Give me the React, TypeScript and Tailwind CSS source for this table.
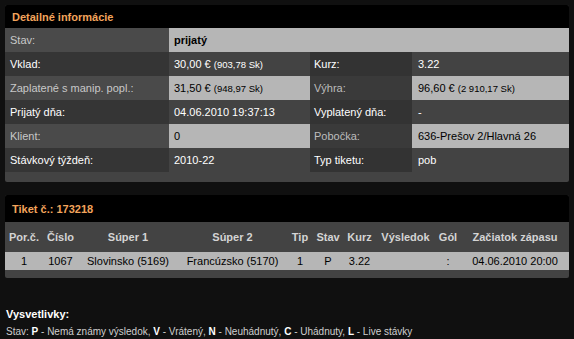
import React from 'react';

const font = { fontFamily: '"Liberation Sans", Arial, sans-serif' };

interface InfoRow {
  label: string;
  value: React.ReactNode;
  label2?: string;
  value2?: React.ReactNode;
}

function Money({ eur, sk }: { eur: string; sk: string }) {
  return (
    <span>
      {eur + ' €'}
      {' '}
      <span className="text-[9.5px]">({sk} Sk)</span>
    </span>
  );
}

const rows: InfoRow[] = [
  { label: 'Stav:', value: <b>prijatý</b> },
  { label: 'Vklad:', value: <Money eur="30,00" sk="903,78" />, label2: 'Kurz:', value2: '3.22' },
  {
    label: 'Zaplatené s manip. popl.:',
    value: <Money eur="31,50" sk="948,97" />,
    label2: 'Výhra:',
    value2: <Money eur="96,60" sk="2 910,17" />,
  },
  { label: 'Prijatý dňa:', value: '04.06.2010 19:37:13', label2: 'Vyplatený dňa:', value2: '-' },
  { label: 'Klient:', value: '0', label2: 'Pobočka:', value2: '636-Prešov 2/Hlavná 26' },
  { label: 'Stávkový týždeň:', value: '2010-22', label2: 'Typ tiketu:', value2: 'pob' },
];

const cols = [
  { name: 'Por.č.', w: 'w-[38px]' },
  { name: 'Číslo', w: 'w-[35px]' },
  { name: 'Súper 1', w: 'w-[100px]' },
  { name: 'Súper 2', w: 'w-[109px]' },
  { name: 'Tip', w: 'w-[26px]' },
  { name: 'Stav', w: 'w-[30px]' },
  { name: 'Kurz', w: 'w-[33px]' },
  { name: 'Výsledok', w: 'w-[59px]' },
  { name: 'Gól', w: 'w-[26px]' },
  { name: 'Začiatok zápasu', w: 'w-[108px]' },
];

const ticket = ['1', '1067', 'Slovinsko (5169)', 'Francúzsko (5170)', '1', 'P', '3.22', '', ':', '04.06.2010 20:00'];

export default function App() {
  return (
    <div
      className="w-[574px] h-[339px] bg-[#101010] pt-[5px] pl-[5px] text-[11px] leading-[16px] overflow-hidden"
      style={font}
    >
      {/* detail panel */}
      <div className="w-[564px] bg-[#434343] rounded-[2px] overflow-hidden pb-[10px]">
        <div className="h-[23px] bg-black pl-[7px] flex items-center font-bold text-[#f2a45c]">
          Detailné informácie
        </div>
        {rows.map((r, i) => {
          const odd = i % 2 === 0;
          return (
            <div key={i} className="flex h-[24px]">
              <div
                className={
                  'w-[164px] pl-[5px] flex items-center ' +
                  (odd ? 'bg-[#4a4a4a] text-[#c8c8c8]' : 'bg-[#353535] text-white')
                }
              >
                {r.label}
              </div>
              {r.label2 === undefined ? (
                <div className="flex-1 pl-[5px] flex items-center bg-[#b6b6b6] text-black">{r.value}</div>
              ) : (
                <>
                  <div
                    className={
                      'w-[141px] pl-[5px] flex items-center ' +
                      (odd ? 'bg-[#b6b6b6] text-black' : 'text-white')
                    }
                  >
                    {r.value}
                  </div>
                  <div
                    className={
                      'w-[102px] pl-[4px] flex items-center ' +
                      (odd ? 'bg-[#3a3a3a] text-[#bdbdbd]' : 'bg-[#333333] text-white')
                    }
                  >
                    {r.label2}
                  </div>
                  <div
                    className={
                      'flex-1 pl-[6px] flex items-center ' + (odd ? 'bg-[#b6b6b6] text-black' : 'text-white')
                    }
                  >
                    {r.value2}
                  </div>
                </>
              )}
            </div>
          );
        })}
      </div>

      {/* ticket panel */}
      <div className="w-[564px] mt-[13px] bg-[#434343] rounded-[2px] overflow-hidden pb-[8px]">
        <div className="h-[27px] bg-black pl-[7px] flex items-center font-bold text-[#f2a45c]">Tiket č.: 173218</div>
        <div className="flex h-[30px] items-center font-bold text-[#d4d4d4]">
          {cols.map((c) => (
            <div key={c.name} className={c.w + ' text-center shrink-0'}>
              {c.name}
            </div>
          ))}
        </div>
        <div className="flex h-[18px] items-center bg-[#b6b6b6] text-black">
          {ticket.map((t, i) => (
            <div key={i} className={cols[i].w + ' text-center shrink-0'}>
              {t}
            </div>
          ))}
        </div>
      </div>

      {/* legend */}
      <div className="mt-[28px] pl-[1px]">
        <div className="font-bold text-white">Vysvetlivky:</div>
        <div className="mt-[2px] text-[10px] text-[#cfcfcf]">
          Stav: <b className="text-white">P</b> - Nemá známy výsledok, <b className="text-white">V</b> - Vrátený,{' '}
          <b className="text-white">N</b> - Neuhádnutý, <b className="text-white">C</b> - Uhádnuty,{' '}
          <b className="text-white">L</b> - Live stávky
        </div>
      </div>
    </div>
  );
}
